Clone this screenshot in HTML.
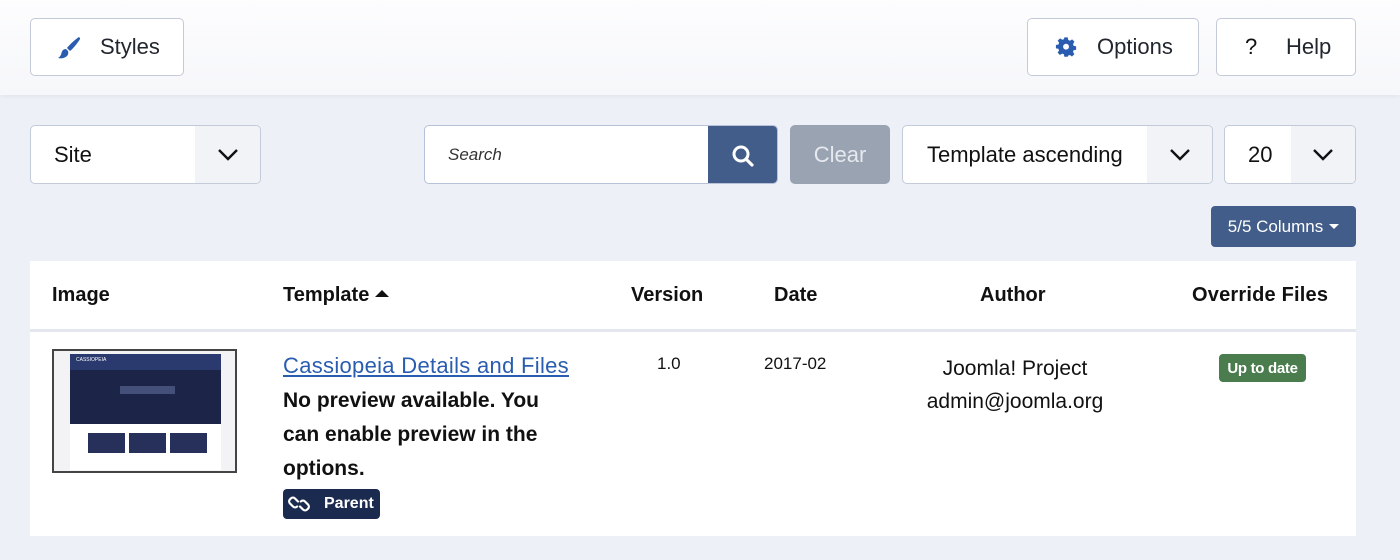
<!DOCTYPE html>
<html><head><meta charset="utf-8"><style>
*{box-sizing:border-box;margin:0;padding:0}
body{width:1400px;height:560px;overflow:hidden;background:#eef0f7;font-family:"Liberation Sans",Arial,sans-serif;color:#111;position:relative}
.hdr{position:absolute;left:0;top:0;width:1400px;height:95px;background:linear-gradient(#fdfdfe,#f6f7fa);box-shadow:0 2px 4px rgba(0,0,0,.04)}
.btn{position:absolute;background:#fff;border:1px solid #c3cad8;border-radius:5px;display:flex;align-items:center;font-size:22px;color:#22262e}
.sel{position:absolute;background:#fff;border:1px solid #c3cad8;border-radius:5px;font-size:22px;color:#111;overflow:hidden}
.sel .t{position:absolute;top:0;height:100%;display:flex;align-items:center}
.sel .a{position:absolute;top:0;right:0;height:100%;background:#f1f3f7;display:flex;align-items:center;justify-content:center}
.abs{position:absolute}
.h{position:absolute;top:284px;font-weight:bold;font-size:20px;color:#111}
</style></head><body>
<div class="hdr"></div>
<div class="btn" style="left:30px;top:18px;width:154px;height:58px">
<svg style="position:absolute;left:26px;top:17px" width="24" height="24" viewBox="0 0 24 24"><path d="M22 1c-2 1-9 7-12 11l3 3c4-3 9-10 10-12 .3-.8-.3-1.4-1-2z M9 13c-3 0-4 2-4.5 4S3 21 1 22c3 1 7 0 9-2 1.5-1.5 1.5-4 1-5z" fill="#2a5db0"/></svg>
<span style="position:absolute;left:69px">Styles</span></div>
<div class="btn" style="left:1027px;top:18px;width:172px;height:58px">
<svg style="position:absolute;left:27px;top:18px" width="22" height="22" viewBox="0 0 24 24"><path fill="#2a5db0" fill-rule="evenodd" d="M10 1h4l.6 3 2 1 2.6-1.7 2.8 2.8L20.3 9l.8 2 2.9.6v4l-3 .6-.8 2 1.7 2.6-2.8 2.8-2.6-1.7-2 .8L14 24h-4l-.6-3-2-.8-2.6 1.7L2 19.1 3.7 16.5l-.8-2L0 14v-4l3-.6.8-2L2.1 4.9 4.9 2.1 7.5 3.8l2-.8z M12 8.5a3.5 3.5 0 1 0 0 7 3.5 3.5 0 1 0 0-7z" transform="translate(1 -.5) scale(.92)"/></svg>
<span style="position:absolute;left:69px">Options</span></div>
<div class="btn" style="left:1216px;top:18px;width:140px;height:58px">
<span style="position:absolute;left:28px;color:#111">?</span>
<span style="position:absolute;left:69px">Help</span></div>

<div class="sel" style="left:30px;top:125px;width:231px;height:59px"><span class="t" style="left:23px">Site</span><span class="a" style="width:65px"><svg width="22" height="14" viewBox="0 0 22 14"><path d="M2 2l9 9 9-9" fill="none" stroke="#111" stroke-width="2.4"/></svg></span></div>

<div class="sel" style="left:424px;top:125px;width:354px;height:59px;border-color:#b7c2d9"><span class="t" style="left:23px;font-size:17px;font-style:italic;color:#333">Search</span>
<span class="abs" style="left:283px;top:0;width:70px;height:59px;background:#425d89;display:flex;align-items:center;justify-content:center"><svg width="24" height="24" viewBox="0 0 24 24"><circle cx="10" cy="10" r="7" fill="none" stroke="#fff" stroke-width="3"/><path d="M15 15l6 6" stroke="#fff" stroke-width="3.2" stroke-linecap="round"/></svg></span></div>
<div class="abs" style="left:790px;top:125px;width:100px;height:59px;background:#99a3b1;border-radius:5px;color:#e6e9ee;font-size:22px;display:flex;align-items:center;justify-content:center">Clear</div>

<div class="sel" style="left:902px;top:125px;width:311px;height:59px"><span class="t" style="left:24px">Template ascending</span><span class="a" style="width:65px"><svg width="22" height="14" viewBox="0 0 22 14"><path d="M2 2l9 9 9-9" fill="none" stroke="#111" stroke-width="2.4"/></svg></span></div>
<div class="sel" style="left:1224px;top:125px;width:132px;height:59px"><span class="t" style="left:23px">20</span><span class="a" style="width:64px"><svg width="22" height="14" viewBox="0 0 22 14"><path d="M2 2l9 9 9-9" fill="none" stroke="#111" stroke-width="2.4"/></svg></span></div>

<div class="abs" style="left:1211px;top:206px;width:145px;height:41px;background:#425d89;border-radius:4px;color:#fff;font-size:17px;display:flex;align-items:center;justify-content:center">5/5 Columns<span style="display:inline-block;margin-left:6px;border-left:5px solid transparent;border-right:5px solid transparent;border-top:5px solid #fff"></span></div>

<div class="abs" style="left:30px;top:261px;width:1326px;height:275px;background:#fff"></div>
<div class="abs" style="left:30px;top:329px;width:1326px;height:3px;background:#e4e7ee"></div>
<div class="h" style="left:52px">Image</div>
<div class="h" style="left:283px">Template <span style="display:inline-block;vertical-align:4px;border-left:7px solid transparent;border-right:7px solid transparent;border-bottom:7px solid #111"></span></div>
<div class="h" style="left:631px">Version</div>
<div class="h" style="left:774px">Date</div>
<div class="h" style="left:980px">Author</div>
<div class="h" style="left:1192px;letter-spacing:.2px">Override Files</div>

<div class="abs" style="left:52px;top:349px;width:185px;height:124px;border:2px solid #444;background:#f3f3f5">
<div class="abs" style="left:16px;top:3px;width:151px;height:70px;background:#1c2547"><div style="height:16px;background:#2b3a6e;color:#fff;font-size:5px;padding:3px 6px">CASSIOPEIA</div><div style="position:absolute;left:50px;top:32px;width:55px;height:8px;background:#45507a"></div></div>
<div class="abs" style="left:16px;top:73px;width:151px;height:46px;background:#fff"></div>
<div class="abs" style="left:34px;top:82px;width:37px;height:20px;background:#27305a"></div>
<div class="abs" style="left:75px;top:82px;width:37px;height:20px;background:#27305a"></div>
<div class="abs" style="left:116px;top:82px;width:37px;height:20px;background:#27305a"></div>
</div>

<div class="abs" style="left:283px;top:353px;font-size:22px;letter-spacing:.3px;color:#2a5db0;text-decoration:underline">Cassiopeia Details and Files</div>
<div class="abs" style="left:283px;top:384px;width:275px;font-size:21px;line-height:34px;font-weight:bold;color:#111">No preview available. You can enable preview in the options.</div>
<div class="abs" style="left:283px;top:489px;width:97px;height:30px;background:#1b2a4f;border-radius:4px;color:#fff;font-weight:bold;font-size:16px;display:flex;align-items:center">
<svg style="margin-left:5px" width="22" height="18" viewBox="0 0 22 18"><g fill="none" stroke="#fff" stroke-width="2.2" stroke-linecap="round"><path d="M10 6.5l-3-3a3 3 0 0 0-4.2 0l-.8.8a3 3 0 0 0 0 4.2l3 3a3 3 0 0 0 4.2 0"/><path d="M12 11.5l3 3a3 3 0 0 0 4.2 0l.8-.8a3 3 0 0 0 0-4.2l-3-3a3 3 0 0 0-4.2 0"/></g></svg>
<span style="margin-left:14px">Parent</span></div>

<div class="abs" style="left:657px;top:354px;font-size:17px">1.0</div>
<div class="abs" style="left:764px;top:354px;font-size:17px">2017-02</div>
<div class="abs" style="left:900px;top:352px;width:230px;text-align:center;font-size:21px;line-height:33px">Joomla! Project<br>admin@joomla.org</div>
<div class="abs" style="left:1219px;top:354px;width:87px;height:28px;background:#4a7c4e;border-radius:4px;color:#fff;font-weight:bold;font-size:15px;display:flex;align-items:center;justify-content:center;letter-spacing:-.3px">Up to date</div>
</body></html>
